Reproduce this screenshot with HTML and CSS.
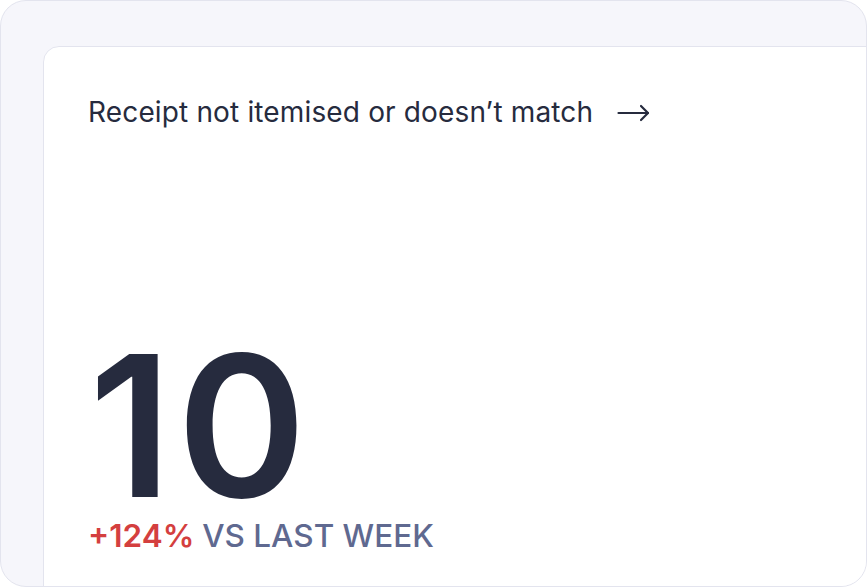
FILE: index.html
```html
<!DOCTYPE html>
<html>
<head>
<meta charset="utf-8">
<link rel="stylesheet" href="styles.css">
</head>
<body>
<div class="frame">
  <div class="card">
    <div class="title">
      <span>Receipt not itemised or doesn’t match</span>
      <svg class="arrow" width="33" height="18" viewBox="0 0 33 18" fill="none" stroke="#262b3e" stroke-width="2.2" stroke-linecap="round" stroke-linejoin="round">
        <path d="M1.5 9 H31"/>
        <path d="M24 2 L31 9 L24 16"/>
      </svg>
    </div>
    <div class="value">10</div>
    <div class="delta"><span class="up">+124%</span> <span class="vs">VS LAST WEEK</span></div>
  </div>
</div>
</body>
</html>
```
FILE: styles.css
```css
html, body {
  margin: 0;
  padding: 0;
  background: #ffffff;
}
body {
  width: 868px;
  height: 588px;
  font-family: Inter, "Noto Sans", sans-serif;
}
.frame {
  box-sizing: border-box;
  width: 867px;
  height: 587px;
  border: 1px solid #e3e4ee;
  border-radius: 26px;
  background: #f6f6fb;
  overflow: hidden;
  padding: 45px 0 0 42px;
}
.card {
  box-sizing: border-box;
  width: 900px;
  height: 620px;
  background: #ffffff;
  border: 1px solid #e3e4ee;
  border-radius: 16px;
  padding: 45px 0 0 44px;
  display: flex;
  flex-direction: column;
}
.title {
  display: flex;
  align-items: center;
  gap: 24px;
  font-size: 28px;
  font-weight: 400;
  color: #262b3e;
  line-height: 40px;
  letter-spacing: 0.15px;
}
.arrow {
  margin-top: 2px;
}
.value {
  margin-top: 209px;
  font-size: 196px;
  font-weight: 600;
  color: #262b3e;
  line-height: 170px;
  letter-spacing: 5px;
  margin-left: 1px;
}
.delta {
  margin-top: 5px;
  font-size: 31.5px;
  font-weight: 600;
  line-height: 40px;
}
.up {
  color: #d43f3f;
}
.vs {
  color: #5f6990;
  font-weight: 500;
}
```
